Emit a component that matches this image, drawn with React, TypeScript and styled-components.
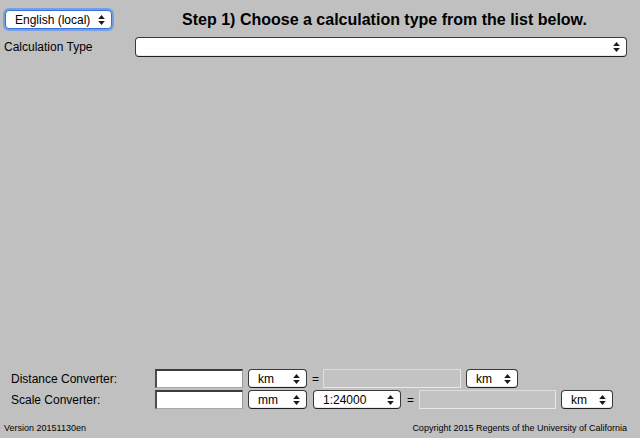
import React from 'react';
import styled, { createGlobalStyle } from 'styled-components';

const GlobalStyle = createGlobalStyle`
  html, body {
    margin: 0;
    padding: 0;
    background: #c0c0c0;
    font-family: "Liberation Sans", Arial, Helvetica, sans-serif;
    color: #000;
  }
`;

const Page = styled.div`
  display: flex;
  flex-direction: column;
  height: 100vh;
  box-sizing: border-box;
`;

const Header = styled.div`
  display: grid;
  grid-template-columns: 131px 492px;
  grid-template-rows: 19px 20px;
  row-gap: 8px;
  padding: 10px 0 0 4px;
  align-items: center;
`;

const Heading = styled.h1`
  margin: 0;
  font-size: 16px;
  font-weight: bold;
  text-align: center;
  padding-left: 7px;
`;

const Label = styled.span<{ Indent?: string }>`
  font-size: 12px;
  padding-left: ${(props) => props.Indent || '0'};
`;

const Spacer = styled.div`
  flex: 1;
`;

const Converters = styled.div`
  display: grid;
  grid-template-columns: 144px auto;
  row-gap: 2px;
  padding-left: 11px;
  align-items: center;
`;

const ConverterRow = styled.div`
  display: flex;
  align-items: center;
`;

const Equals = styled.span<{ Left: string; Right: string }>`
  font-size: 12px;
  margin: 0 ${(props) => props.Right} 0 ${(props) => props.Left};
`;

const TextInput = styled.input`
  box-sizing: border-box;
  width: ${(props) => props.width}px;
  height: 19px;
  margin: 0;
  padding: 0 3px;
  background: #fff;
  border-style: solid;
  border-width: 2px 1px 1px 2px;
  border-color: #3c3c3c #9a9a9a #a8a8a8 #4c4c4c;
  font-family: inherit;
  font-size: 12px;
  outline: none;

  &:disabled {
    background: #c3c3c3;
    border-width: 1px;
    border-color: #dedede #e8e8e8 #e8e8e8 #dedede;
  }
`;

const SelectWrap = styled.div<{ Width: number; Gap?: number }>`
  position: relative;
  display: inline-flex;
  width: ${(props) => props.Width}px;
  margin-left: ${(props) => props.Gap ?? 5}px;
`;

const NativeSelect = styled.select<{ Focused?: boolean; Tall?: boolean }>`
  appearance: none;
  -webkit-appearance: none;
  box-sizing: border-box;
  width: 100%;
  height: ${(props) => (props.Tall ? 20 : 19)}px;
  margin: 0;
  padding: 0 18px 0 9px;
  background: #fff;
  border: 1px solid ${(props) => (props.Focused ? '#3470dc' : '#3a3a3a')};
  border-bottom-color: ${(props) => (props.Focused ? '#3470dc' : '#1e1e1e')};
  border-radius: 4px;
  box-shadow: ${(props) =>
    props.Focused
      ? '0 0 0 2px rgba(96, 150, 236, 0.75)'
      : 'inset 0 -1px 0 rgba(0, 0, 0, 0.08)'};
  font-family: inherit;
  font-size: 12px;
  color: #000;
  outline: none;
`;

const Arrows = styled.svg`
  position: absolute;
  right: 7px;
  top: 50%;
  transform: translateY(-50%);
  pointer-events: none;
`;

const Footer = styled.div`
  display: flex;
  justify-content: space-between;
  padding: 14px 13px 5px 4px;
  font-size: 9px;
`;

function UpDown() {
  return (
    <Arrows width="7" height="11" viewBox="0 0 7 11">
      <path d="M3.5 0.5 L6.8 4.6 L0.2 4.6 Z" fill="#1a1a1a" />
      <path d="M3.5 10.5 L6.8 6.4 L0.2 6.4 Z" fill="#1a1a1a" />
    </Arrows>
  );
}

interface SelectProps {
  width: number;
  gap?: number;
  options: string[];
  focused?: boolean;
  tall?: boolean;
}

function Select({ width, gap, options, focused, tall }: SelectProps) {
  return (
    <SelectWrap Width={width} Gap={gap}>
      <NativeSelect Focused={focused} Tall={tall}>
        {options.map((o) => (
          <option key={o}>{o}</option>
        ))}
      </NativeSelect>
      <UpDown />
    </SelectWrap>
  );
}

export default function App() {
  return (
    <>
      <GlobalStyle />
      <Page>
        <Header>
          <Select width={107} gap={1} options={['English (local)']} focused />
          <Heading>Step 1) Choose a calculation type from the list below.</Heading>
          <Label>Calculation Type</Label>
          <Select width={492} gap={0} options={['']} tall />
        </Header>
        <Spacer />
        <Converters>
          <Label>Distance Converter:</Label>
          <ConverterRow>
            <TextInput width={88} />
            <Select width={59} options={['km', 'm', 'mi', 'ft']} />
            <Equals Left="5px" Right="4px">=</Equals>
            <TextInput width={138} disabled />
            <Select width={52} options={['km', 'm', 'mi', 'ft']} />
          </ConverterRow>
          <Label>Scale Converter:</Label>
          <ConverterRow>
            <TextInput width={88} />
            <Select width={59} options={['mm', 'cm', 'in']} />
            <Select width={88} gap={6} options={['1:24000', '1:62500', '1:100000']} />
            <Equals Left="6px" Right="5px">=</Equals>
            <TextInput width={137} disabled />
            <Select width={52} options={['km', 'm', 'mi', 'ft']} />
          </ConverterRow>
        </Converters>
        <Footer>
          <span>Version 20151130en</span>
          <span>Copyright 2015 Regents of the University of California</span>
        </Footer>
      </Page>
    </>
  );
}
